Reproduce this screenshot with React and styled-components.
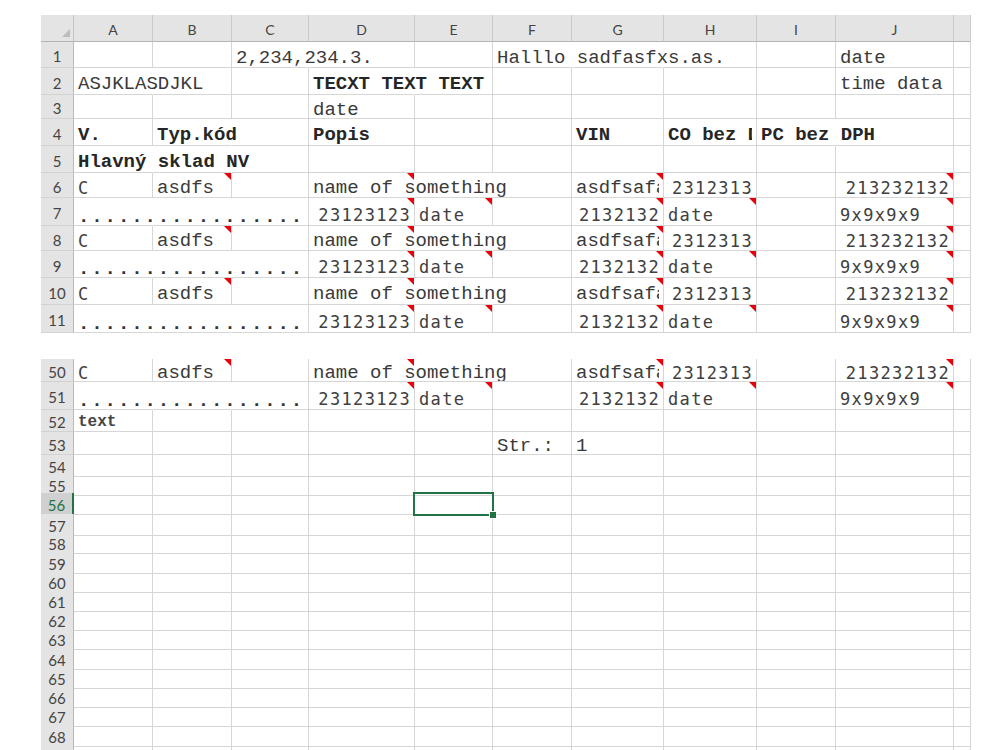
import React from 'react';
import styled, { createGlobalStyle, css } from 'styled-components';

const Global = createGlobalStyle`
  html, body { margin: 0; padding: 0; background: #fff; overflow: hidden; }
  #root { width: 1000px; height: 750px; overflow: hidden; }
`;

const COLS = '33px 79px 79px 77px 106px 78px 79px 92px 93px 79px 118px 17px';
const LETTERS = ['A', 'B', 'C', 'D', 'E', 'F', 'G', 'H', 'I', 'J', ''];
const GRID = '#d6d6d6';
const GREEN = '#217346';
const COURIER =
  "'Courier New', 'Nimbus Mono PS', 'Nimbus Mono L', 'FreeMono', Courier, 'Liberation Mono', monospace";

const Page = styled.div`
  padding: 15px 29px 0 41px;
`;

const Sheet = styled.div`
  width: 930px;
  display: flex;
  flex-direction: column;
`;

const Row = styled.div`
  display: grid;
  grid-template-columns: ${COLS};
  height: ${(p) => p.$h}px;
`;

const Gap = styled.div`
  height: ${(p) => p.$h}px;
  background: #fff;
`;

const Corner = styled.div`
  position: relative;
  background: #e4e4e4;
  border-right: 1px solid #c4c4c4;
  border-bottom: 1px solid #b4b4b4;
  &::after {
    content: '';
    position: absolute;
    right: 3px;
    bottom: 4px;
    border-bottom: 8px solid #bdbdbd;
    border-left: 8px solid transparent;
  }
`;

const ColHead = styled.div`
  display: flex;
  align-items: center;
  justify-content: center;
  padding-top: 2px;
  background: #e4e4e4;
  border-right: 1px solid #cacaca;
  border-bottom: 1px solid #b4b4b4;
  font-family: 'Lato', 'Liberation Sans', sans-serif;
  font-size: 14px;
  color: #444;
`;

const RowHead = styled.div`
  display: flex;
  align-items: center;
  justify-content: center;
  padding-top: 3px;
  background: #e4e4e4;
  border-right: 1px solid #bababa;
  border-bottom: 1px solid #d2d2d2;
  font-family: 'Lato', 'Liberation Sans', sans-serif;
  font-size: 15px;
  color: #444;
  ${(p) =>
    p.$active &&
    css`
      background: #d0d0d0;
      color: ${GREEN};
      border-right: 2px solid ${GREEN};
    `}
`;

const Cell = styled.div`
  position: relative;
  min-width: 0;
  display: flex;
  align-items: center;
  justify-content: ${(p) => (p.$r ? 'flex-end' : 'flex-start')};
  padding: 6px ${(p) => (p.$s && p.$r ? 3 : 4)}px 0 4px;
  border-right: 1px solid ${(p) => (p.$flow ? 'transparent' : GRID)};
  border-bottom: 1px solid ${GRID};
  white-space: nowrap;
  overflow: ${(p) => (p.$clip ? 'hidden' : 'visible')};
  font-family: ${COURIER};
  font-size: 19px;
  line-height: 16px;
  font-weight: ${(p) => (p.$b ? 700 : 400)};
  color: ${(p) => (p.$b ? '#262626' : '#3a3a3a')};
  ${(p) =>
    p.$s &&
    css`
      font-family: 'DejaVu Sans Mono', monospace;
      font-size: 17px;
      letter-spacing: 1.35px;
      color: #404040;
    `}
  ${(p) =>
    p.$small &&
    css`
      font-size: 16px;
      font-weight: 700;
      color: #444;
      padding-top: 3px;
    `}
  ${(p) =>
    p.$dots &&
    css`
      font-weight: 700;
      letter-spacing: 1.9px;
      padding-top: 10px;
      color: #333;
    `}
  ${(p) =>
    p.$note &&
    css`
      &::after {
        content: '';
        position: absolute;
        top: 0;
        right: 0;
        border-top: 7px solid #e8000b;
        border-left: 7px solid transparent;
      }
    `}
`;

const Clipped = styled.span`
  display: block;
  min-width: 0;
  overflow: hidden;
`;

const Selection = styled.div`
  position: absolute;
  z-index: 3;
  left: -2px;
  right: -2px;
  top: -1px;
  bottom: -2px;
  border: 2px solid ${GREEN};
  pointer-events: none;
`;

const Handle = styled.div`
  position: absolute;
  right: -5px;
  bottom: -5px;
  width: 6px;
  height: 6px;
  background: ${GREEN};
  border: 1px solid #fff;
`;

const DOTS = '.................';

const itemTop = (n, h) => ({
  n,
  h,
  cells: {
    0: { t: 'C', s: true },
    1: { t: 'asdfs', note: true },
    3: { t: 'name of something', flow: true, note: true },
    4: { flow: true },
    6: { t: 'asdfsafasdf', clip: true, note: true },
    7: { t: '2312313', s: true, r: true },
    9: { t: '213232132', s: true, r: true, note: true },
  },
});

const itemBottom = (n, h) => ({
  n,
  h,
  cells: {
    0: { t: DOTS, dots: true, flow: true },
    1: { flow: true },
    3: { t: '23123123', s: true, r: true, note: true },
    4: { t: 'date', s: true, note: true },
    6: { t: '2132132', s: true, r: true, note: true },
    7: { t: 'date', s: true, note: true },
    9: { t: '9x9x9x9', s: true, note: true },
  },
});

const topRows = [
  {
    n: 1,
    h: 26,
    cells: {
      2: { t: '2,234,234.3.', flow: true },
      5: { t: 'Halllo sadfasfxs.as.', flow: true },
      6: { flow: true },
      9: { t: 'date' },
    },
  },
  {
    n: 2,
    h: 27,
    cells: {
      0: { t: 'ASJKLASDJKL', flow: true },
      3: { t: 'TECXT TEXT TEXT', b: true, flow: true },
      9: { t: 'time data' },
    },
  },
  { n: 3, h: 24, cells: { 3: { t: 'date' } } },
  {
    n: 4,
    h: 27,
    cells: {
      0: { t: 'V.', b: true },
      1: { t: 'Typ.kód', b: true, flow: true },
      3: { t: 'Popis', b: true },
      6: { t: 'VIN', b: true },
      7: { t: 'CO bez DPH', b: true, clip: true },
      8: { t: 'PC bez DPH', b: true, flow: true },
    },
  },
  {
    n: 5,
    h: 27,
    cells: { 0: { t: 'Hlavný sklad NV', b: true, flow: true }, 1: { flow: true } },
  },
  itemTop(6, 25),
  itemBottom(7, 28),
  itemTop(8, 25),
  itemBottom(9, 27),
  itemTop(10, 27),
  itemBottom(11, 28),
];

const lowHeights = [18, 20, 19, 19, 19, 19, 20, 19, 19, 19, 20, 18, 19];

const bottomRows = [
  itemTop(50, 23),
  itemBottom(51, 28),
  { n: 52, h: 22, cells: { 0: { t: 'text', small: true } } },
  { n: 53, h: 23, cells: { 5: { t: 'Str.:' }, 6: { t: '1' } } },
  { n: 54, h: 19, cells: {} },
  { n: 55, h: 19, cells: {} },
  { n: 56, h: 21, active: true, cells: { 4: { selected: true } } },
  ...lowHeights.map((h, i) => ({ n: 57 + i, h, cells: {} })),
];

function SheetRow({ row }) {
  return (
    <Row $h={row.h}>
      <RowHead $active={row.active}>{row.n}</RowHead>
      {LETTERS.map((_, ci) => {
        const c = row.cells[ci] || {};
        return (
          <Cell
            key={ci}
            $b={c.b}
            $s={c.s}
            $r={c.r}
            $flow={c.flow}
            $clip={c.clip}
            $note={c.note}
            $dots={c.dots}
            $small={c.small}
          >
            {c.clip ? <Clipped>{c.t}</Clipped> : c.t}
            {c.selected && (
              <Selection>
                <Handle />
              </Selection>
            )}
          </Cell>
        );
      })}
    </Row>
  );
}

export default function App() {
  return (
    <>
      <Global />
      <Page>
        <Sheet>
          <Row $h={27}>
            <Corner />
            {LETTERS.map((l, i) => (
              <ColHead key={i}>{l}</ColHead>
            ))}
          </Row>
          {topRows.map((r) => (
            <SheetRow key={r.n} row={r} />
          ))}
          <Gap $h={26} />
          {bottomRows.map((r) => (
            <SheetRow key={r.n} row={r} />
          ))}
        </Sheet>
      </Page>
    </>
  );
}
